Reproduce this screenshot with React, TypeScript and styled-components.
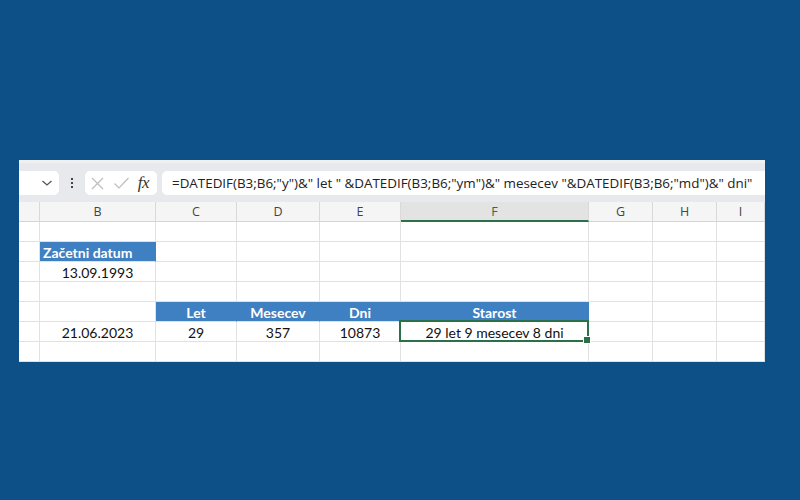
import styled, { createGlobalStyle } from 'styled-components';

const GlobalStyle = createGlobalStyle`
  * { box-sizing: border-box; }
  body {
    margin: 0;
    background: #0c5087;
  }
`;

const Page = styled.div`
  width: 800px;
  height: 500px;
  background: #0c5087;
  padding: 160px 0 0 19px;
`;

const Sheet = styled.div`
  width: 746px;
  background: #ffffff;
  font-family: Lato, 'Liberation Sans', sans-serif;
`;

const FormulaBar = styled.div`
  height: 42px;
  background: #e7e9ec;
  border-top: 3px solid #eff0f2;
  display: flex;
  align-items: center;
  gap: 5px;
  padding-top: 1px;
`;

const Box = styled.div<{ $w?: number }>`
  height: 24px;
  background: #ffffff;
  border-radius: 5px;
  display: flex;
  align-items: center;
  ${(p) => (p.$w ? `width: ${p.$w}px;` : 'flex: 1;')}
`;

const NameBox = styled(Box)`
  border-radius: 0 5px 5px 0;
  justify-content: flex-end;
  padding-right: 6px;
`;

const Dots = styled.div`
  width: 12px;
  display: flex;
  flex-direction: column;
  align-items: center;
  gap: 2px;
  margin: 0 2px;
  span {
    width: 2px;
    height: 2px;
    background: #444;
  }
`;

const IconBox = styled(Box)`
  justify-content: space-between;
  padding: 0 8px 0 5px;
`;

const Fx = styled.span`
  font-family: 'Liberation Serif', serif;
  font-style: italic;
  font-size: 17px;
  color: #333;
  letter-spacing: -0.5px;
`;

const FormulaText = styled(Box)`
  border-radius: 5px 0 0 5px;
  padding-left: 10px;
  font-family: 'Open Sans', 'Noto Sans', sans-serif;
  font-size: 13.4px;
  color: #222;
  white-space: nowrap;
  overflow: hidden;
`;

const cols = [21, 116, 81, 83, 81, 188, 64, 64, 48];

const Grid = styled.div`
  display: grid;
  grid-template-columns: ${cols.map((c) => `${c}px`).join(' ')};
  grid-auto-rows: 20px;
`;

const HeadCell = styled.div<{ $active?: boolean }>`
  height: 20px;
  display: flex;
  align-items: center;
  justify-content: center;
  font-family: 'Open Sans', 'Noto Sans', sans-serif;
  font-size: 12.5px;
  color: ${(p) => (p.$active ? '#2f6b45' : '#444')};
  background: ${(p) => (p.$active ? '#e3e3e3' : '#f5f5f5')};
  border-right: 1px solid #d9d9d9;
  border-bottom: ${(p) => (p.$active ? '2px solid #2c7048' : '1px solid #d4d4d4')};
`;

const Cell = styled.div<{ $blue?: boolean; $left?: boolean }>`
  position: relative;
  display: flex;
  align-items: center;
  justify-content: ${(p) => (p.$left ? 'flex-start' : 'center')};
  padding: ${(p) => (p.$left ? '1px 3px 0' : '1px 0 0')};
  font-size: 14px;
  color: ${(p) => (p.$blue ? '#ffffff' : '#111')};
  font-weight: ${(p) => (p.$blue ? 700 : 400)};
  background: ${(p) => (p.$blue ? '#3e80c2' : '#ffffff')};
  border-right: 1px solid ${(p) => (p.$blue ? '#3e80c2' : '#e1e1e1')};
  border-bottom: 1px solid #e1e1e1;
  white-space: nowrap;
`;

const Selection = styled.div`
  position: absolute;
  z-index: 2;
  left: -2px;
  top: -2px;
  right: -1px;
  bottom: -1px;
  border: 2px solid #2a7148;
  pointer-events: none;
  &::after {
    content: '';
    position: absolute;
    right: -4px;
    bottom: -4px;
    width: 6px;
    height: 6px;
    background: #2a7148;
    border: 1px solid #fff;
  }
`;

type C = { t?: string; blue?: boolean; left?: boolean; sel?: boolean };

const rows: C[][] = [
  [],
  [{}, { t: 'Začetni datum', blue: true, left: true }],
  [{}, { t: '13.09.1993' }],
  [],
  [{}, {}, { t: 'Let', blue: true }, { t: 'Mesecev', blue: true }, { t: 'Dni', blue: true }, { t: 'Starost', blue: true }],
  [{}, { t: '21.06.2023' }, { t: '29' }, { t: '357' }, { t: '10873' }, { t: '29 let 9 mesecev 8 dni', sel: true }],
  [],
];

const letters = ['', 'B', 'C', 'D', 'E', 'F', 'G', 'H', 'I'];

const App = () => {
  return (
    <>
      <GlobalStyle />
      <Page>
        <Sheet>
          <FormulaBar>
            <NameBox $w={40}>
              <svg width="12" height="8" viewBox="0 0 12 8">
                <path d="M1.5 2 L6 6 L10.5 2" fill="none" stroke="#555" strokeWidth="1.3" />
              </svg>
            </NameBox>
            <Dots>
              <span />
              <span />
              <span />
            </Dots>
            <IconBox $w={72}>
              <svg width="15" height="15" viewBox="0 0 15 15">
                <path d="M2 2 L13 13 M13 2 L2 13" stroke="#bdbdbd" strokeWidth="1.2" />
              </svg>
              <svg width="17" height="14" viewBox="0 0 17 14">
                <path d="M1.5 7.5 L6 12 L15.5 2" fill="none" stroke="#bdbdbd" strokeWidth="1.2" />
              </svg>
              <Fx>fx</Fx>
            </IconBox>
            <FormulaText>
              =DATEDIF(B3;B6;"y")&amp;" let " &amp;DATEDIF(B3;B6;"ym")&amp;" mesecev "&amp;DATEDIF(B3;B6;"md")&amp;" dni"
            </FormulaText>
          </FormulaBar>
          <Grid>
            {letters.map((l, i) => (
              <HeadCell key={i} $active={l === 'F'}>
                {l}
              </HeadCell>
            ))}
            {rows.map((r, ri) =>
              cols.map((_, ci) => {
                const c = r[ci] || {};
                return (
                  <Cell key={`${ri}-${ci}`} $blue={c.blue} $left={c.left}>
                    {c.t}
                    {c.sel && <Selection />}
                  </Cell>
                );
              })
            )}
          </Grid>
        </Sheet>
      </Page>
    </>
  );
};

export default App;
